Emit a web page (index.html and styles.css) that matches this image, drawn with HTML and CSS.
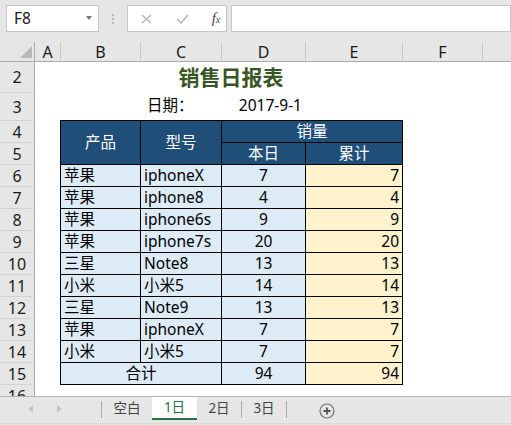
FILE: index.html
```html
<!DOCTYPE html>
<html>
<head>
<meta charset="utf-8">
<link rel="stylesheet" href="styles.css">
</head>
<body>
<div class="app">
  <div class="fbar">
    <div class="namebox"><span class="ref">F8</span><span class="dd"></span></div>
    <div class="grip"><i></i><i></i><i></i></div>
    <div class="fxbox">
      <svg class="ic-x" width="11" height="10" viewBox="0 0 11 10"><path d="M1 1L10 9M10 1L1 9" stroke="#b4b4b4" stroke-width="1.3" fill="none"/></svg>
      <svg class="ic-ok" width="13" height="10" viewBox="0 0 13 10"><path d="M1 5L5 9L12 1" stroke="#b4b4b4" stroke-width="1.5" fill="none"/></svg>
      <span class="fx">f<span class="fx-x">x</span></span>
    </div>
    <div class="input"></div>
  </div>

  <div class="sheet">
    <div class="corner"><span class="tri"></span></div>
    <div class="ch first">A</div>
    <div class="ch">B</div>
    <div class="ch">C</div>
    <div class="ch">D</div>
    <div class="ch">E</div>
    <div class="ch">F</div>
    <div class="ch"></div>

    <div class="rh top">2</div>
    <div class="title">销售日报表</div>

    <div class="rh">3</div>
    <div class="lbl">日期：</div>
    <div class="date">2017-9-1</div>

    <div class="rh">4</div>
    <div class="th cb r2">产品</div>
    <div class="th cc r2">型号</div>
    <div class="th cde rb">销量</div>

    <div class="rh">5</div>
    <div class="th cd">本日</div>
    <div class="th ce rb">累计</div>

    <div class="rh">6</div>
    <div class="td cb">苹果</div><div class="td cc">iphoneX</div><div class="td cd">7</div><div class="td ce">7</div>
    <div class="rh">7</div>
    <div class="td cb">苹果</div><div class="td cc">iphone8</div><div class="td cd">4</div><div class="td ce">4</div>
    <div class="rh">8</div>
    <div class="td cb">苹果</div><div class="td cc">iphone6s</div><div class="td cd">9</div><div class="td ce">9</div>
    <div class="rh">9</div>
    <div class="td cb">苹果</div><div class="td cc">iphone7s</div><div class="td cd">20</div><div class="td ce">20</div>
    <div class="rh">10</div>
    <div class="td cb">三星</div><div class="td cc">Note8</div><div class="td cd">13</div><div class="td ce">13</div>
    <div class="rh">11</div>
    <div class="td cb">小米</div><div class="td cc">小米5</div><div class="td cd">14</div><div class="td ce">14</div>
    <div class="rh">12</div>
    <div class="td cb">三星</div><div class="td cc">Note9</div><div class="td cd">13</div><div class="td ce">13</div>
    <div class="rh">13</div>
    <div class="td cb">苹果</div><div class="td cc">iphoneX</div><div class="td cd">7</div><div class="td ce">7</div>
    <div class="rh">14</div>
    <div class="td cb">小米</div><div class="td cc">小米5</div><div class="td cd">7</div><div class="td ce">7</div>
    <div class="rh">15</div>
    <div class="td cbc bb">合计</div><div class="td cd bb">94</div><div class="td ce bb">94</div>
    <div class="rh">16</div>
  </div>

  <div class="tabs">
    <div class="nav">
      <svg class="arr" width="5" height="8" viewBox="0 0 5 8"><path d="M5 0L0 4L5 8Z" fill="#c4c4c4"/></svg>
      <svg class="arr" width="5" height="8" viewBox="0 0 5 8"><path d="M0 0L5 4L0 8Z" fill="#c4c4c4"/></svg>
    </div>
    <div class="sep"></div>
    <div class="tab w50">空白</div>
    <div class="tab active">1日</div>
    <div class="tab w44">2日</div>
    <div class="sep"></div>
    <div class="tab w44">3日</div>
    <div class="sep"></div>
    <svg class="add" width="16" height="16" viewBox="0 0 16 16"><circle cx="8" cy="8" r="7" stroke="#707070" stroke-width="1.2" fill="none"/><path d="M8 4.5V11.5M4.5 8H11.5" stroke="#555" stroke-width="1.8"/></svg>
  </div>
</div>
</body>
</html>
```

FILE: styles.css
```css
* { box-sizing: border-box; margin: 0; padding: 0; }
html, body { width: 511px; height: 425px; overflow: hidden; background: #e6e6e6; }
body { font-family: "Noto Sans", "Noto Sans CJK SC", sans-serif; font-size: 15.5px; color: #000; line-height: 1; }

.app { width: 511px; height: 425px; display: flex; flex-direction: column; overflow: hidden; }

/* formula bar */
.fbar { height: 42px; flex: none; display: flex; align-items: flex-start; padding: 5px 0 0 6px; }
.namebox { width: 101px; height: 27px; background: #fff; border: 1px solid #c6c6c6; display: flex; align-items: center; padding-left: 7px; color: #222; }
.dd { margin-left: auto; margin-right: 6px; margin-top: -2px; width: 0; height: 0; border-left: 3.5px solid transparent; border-right: 3.5px solid transparent; border-top: 4px solid #777; }
.grip { width: 31px; height: 27px; display: flex; flex-direction: column; align-items: center; justify-content: center; gap: 2px; }
.grip i { display: block; width: 2px; height: 2px; background: #b8b8b8; }
.fxbox { width: 109px; height: 27px; background: #fff; border: 1px solid #c6c6c6; display: flex; align-items: center; padding-left: 13px; }
.ic-x { margin-top: 1px; }
.ic-ok { margin-left: 24px; margin-top: 1px; }
.fx { margin-left: 23px; font-family: "Liberation Serif", serif; font-style: italic; font-size: 15px; color: #444; }
.fx-x { font-size: 10px; }
.input { margin-left: 4px; width: 280px; height: 27px; background: #fff; border: 1px solid #c6c6c6; flex: none; }

/* sheet grid */
.sheet { height: 354px; flex: none; display: grid; grid-template-columns: 35px 25px 80px 81px 84px 97px 80px 29px; grid-template-rows: 20px 30px 28px repeat(13, 22px); background: #fff; overflow: hidden; }
.corner { background: #e6e6e6; border-right: 1px solid #ababab; border-bottom: 1px solid #ababab; display: flex; justify-content: flex-end; align-items: flex-end; padding: 0 2px 3px 0; }
.tri { width: 0; height: 0; border-left: 12px solid transparent; border-bottom: 12px solid #b8b8b8; }
.ch { background: #e6e6e6; border-left: 1px solid #c8c8c8; border-bottom: 1px solid #ababab; display: flex; align-items: center; justify-content: center; color: #1a1a1a; font-size: 16px; }
.ch.first { border-left: 0; }
.rh { grid-column: 1; background: #e6e6e6; border-right: 1px solid #ababab; border-top: 1px solid #d2d2d2; display: flex; align-items: center; justify-content: center; color: #1a1a1a; font-size: 16px; }
.rh.top { border-top: 0; }

.title { grid-column: 3 / span 4; display: flex; align-items: center; justify-content: center; font-size: 21px; font-weight: bold; color: #375623; }
.lbl { grid-column: 4; display: flex; align-items: center; padding-left: 7px; }
.date { grid-column: 5; display: flex; align-items: center; justify-content: flex-end; padding-right: 3px; }

.cb { grid-column: 3; }
.cc { grid-column: 4; }
.cd { grid-column: 5; justify-content: center; }
.ce { grid-column: 6; }
.cde { grid-column: 5 / span 2; }
.cbc { grid-column: 3 / span 2; justify-content: center; }
.r2 { grid-row: span 2; }

.th, .td { border-left: 1px solid #000; border-top: 1px solid #000; display: flex; align-items: center; padding: 0 3px; }
.th { background: #1f4e78; color: #fff; justify-content: center; }
.td { background: #ddebf7; }
.td.ce { background: #fff2cc; justify-content: flex-end; box-shadow: 1px 0 0 #000; }
.rb { box-shadow: 1px 0 0 #000; }
.bb { box-shadow: 0 1px 0 #000; }
.td.ce.bb { box-shadow: 1px 0 0 #000, 0 1px 0 #000, 1px 1px 0 #000; }

/* sheet tabs */
.tabs { height: 29px; flex: none; border-top: 1px solid #b4b4b4; display: flex; align-items: flex-start; background: #e6e6e6; position: relative; }
.tabs::after { content: ""; position: absolute; left: 0; right: 0; bottom: 1px; border-bottom: 1px dotted #cfcfcf; }
.nav { width: 101px; height: 24px; display: flex; align-items: center; padding-left: 28px; gap: 24px; }
.sep { width: 1px; height: 17px; margin-top: 4px; background: #a8a8a8; flex: none; }
.tab { height: 23px; display: flex; align-items: center; justify-content: center; font-size: 13.5px; color: #444; flex: none; }
.w50 { width: 50px; }
.w44 { width: 44px; }
.tab.active { width: 45px; height: 23px; background: #fff; color: #217346; border-bottom: 2px solid #217346; }
.add { margin-left: 32px; margin-top: 6px; flex: none; }
```
